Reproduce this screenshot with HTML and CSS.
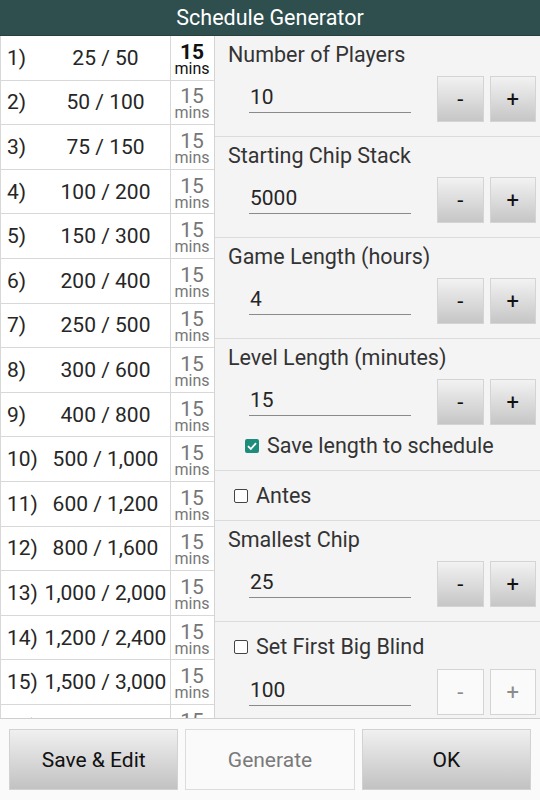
FILE: index.html
```html
<!DOCTYPE html>
<html lang="en">
<head>
    <meta charset="UTF-8">
    <meta name="viewport" content="width=device-width, initial-scale=1.0">
    <title>Schedule Generator</title>
    <link rel="stylesheet" href="styles.css">
</head>
<body>
<div class="app">
    <div class="title-bar">Schedule Generator</div>

    <div class="main">
        <div class="levels">
            <div class="level current"><div class="blinds"><span class="num">1)</span><span class="amt">25 / 50</span></div><div class="mins"><b>15</b><small>mins</small></div></div>
            <div class="level"><div class="blinds"><span class="num">2)</span><span class="amt">50 / 100</span></div><div class="mins"><b>15</b><small>mins</small></div></div>
            <div class="level"><div class="blinds"><span class="num">3)</span><span class="amt">75 / 150</span></div><div class="mins"><b>15</b><small>mins</small></div></div>
            <div class="level"><div class="blinds"><span class="num">4)</span><span class="amt">100 / 200</span></div><div class="mins"><b>15</b><small>mins</small></div></div>
            <div class="level"><div class="blinds"><span class="num">5)</span><span class="amt">150 / 300</span></div><div class="mins"><b>15</b><small>mins</small></div></div>
            <div class="level"><div class="blinds"><span class="num">6)</span><span class="amt">200 / 400</span></div><div class="mins"><b>15</b><small>mins</small></div></div>
            <div class="level"><div class="blinds"><span class="num">7)</span><span class="amt">250 / 500</span></div><div class="mins"><b>15</b><small>mins</small></div></div>
            <div class="level"><div class="blinds"><span class="num">8)</span><span class="amt">300 / 600</span></div><div class="mins"><b>15</b><small>mins</small></div></div>
            <div class="level"><div class="blinds"><span class="num">9)</span><span class="amt">400 / 800</span></div><div class="mins"><b>15</b><small>mins</small></div></div>
            <div class="level"><div class="blinds"><span class="num">10)</span><span class="amt">500 / 1,000</span></div><div class="mins"><b>15</b><small>mins</small></div></div>
            <div class="level"><div class="blinds"><span class="num">11)</span><span class="amt">600 / 1,200</span></div><div class="mins"><b>15</b><small>mins</small></div></div>
            <div class="level"><div class="blinds"><span class="num">12)</span><span class="amt">800 / 1,600</span></div><div class="mins"><b>15</b><small>mins</small></div></div>
            <div class="level"><div class="blinds"><span class="num">13)</span><span class="amt">1,000 / 2,000</span></div><div class="mins"><b>15</b><small>mins</small></div></div>
            <div class="level"><div class="blinds"><span class="num">14)</span><span class="amt">1,200 / 2,400</span></div><div class="mins"><b>15</b><small>mins</small></div></div>
            <div class="level"><div class="blinds"><span class="num">15)</span><span class="amt">1,500 / 3,000</span></div><div class="mins"><b>15</b><small>mins</small></div></div>
            <div class="level"><div class="blinds"><span class="num">16)</span><span class="amt">2,000 / 4,000</span></div><div class="mins"><b>15</b><small>mins</small></div></div>
        </div>

        <div class="settings">
            <div class="section">
                <div class="label">Number of Players</div>
                <div class="field-row">
                    <div class="value">10</div>
                    <button class="step">-</button>
                    <button class="step">+</button>
                </div>
            </div>
            <div class="section">
                <div class="label">Starting Chip Stack</div>
                <div class="field-row">
                    <div class="value">5000</div>
                    <button class="step">-</button>
                    <button class="step">+</button>
                </div>
            </div>
            <div class="section">
                <div class="label">Game Length (hours)</div>
                <div class="field-row">
                    <div class="value">4</div>
                    <button class="step">-</button>
                    <button class="step">+</button>
                </div>
            </div>
            <div class="section">
                <div class="label">Level Length (minutes)</div>
                <div class="field-row">
                    <div class="value">15</div>
                    <button class="step">-</button>
                    <button class="step">+</button>
                </div>
                <div class="check-row indented">
                    <span class="box checked">
                        <svg viewBox="0 0 14 14" width="14" height="14"><path d="M3 7.2 L5.8 10 L11 4.2" fill="none" stroke="#fff" stroke-width="1.8"/></svg>
                    </span>
                    Save length to schedule
                </div>
            </div>
            <div class="section check-section">
                <div class="check-row">
                    <span class="box"></span>
                    Antes
                </div>
            </div>
            <div class="section">
                <div class="label">Smallest Chip</div>
                <div class="field-row">
                    <div class="value">25</div>
                    <button class="step">-</button>
                    <button class="step">+</button>
                </div>
            </div>
            <div class="section check-section">
                <div class="check-row">
                    <span class="box"></span>
                    Set First Big Blind
                </div>
                <div class="field-row">
                    <div class="value">100</div>
                    <button class="step" disabled>-</button>
                    <button class="step" disabled>+</button>
                </div>
            </div>
        </div>
    </div>

    <div class="actions">
        <button class="action">Save &amp; Edit</button>
        <button class="action" disabled>Generate</button>
        <button class="action">OK</button>
    </div>
</div>
</body>
</html>
```

FILE: styles.css
```css
body {
    font-family: Roboto, "Liberation Sans", sans-serif;
    margin: 0;
    padding: 0;
    background-color: #fafafa;
    color: #222;
}

.app {
    width: 540px;
    height: 800px;
    display: flex;
    flex-direction: column;
    overflow: hidden;
}

.title-bar {
    height: 35px;
    line-height: 36px;
    background-color: #2f4f4f;
    border-bottom: 1px solid #263f3f;
    color: #fff;
    font-size: 21.5px;
    text-align: center;
}

.main {
    height: 682px;
    display: flex;
    border-bottom: 1px solid #cfcfcf;
    overflow: hidden;
}

/* blind levels table */
.levels {
    width: 215px;
    flex-shrink: 0;
    background-color: #fff;
    border-right: 1px solid #d4d4d4;
    box-sizing: border-box;
}

.level {
    display: flex;
    height: 44.6px;
    box-sizing: border-box;
    border-bottom: 1px solid #d8d8d8;
}

.blinds {
    width: 171px;
    display: flex;
    align-items: center;
    border-left: 1px solid #d8d8d8;
    border-right: 1px solid #d8d8d8;
    box-sizing: border-box;
    font-size: 21px;
    color: #262626;
}

.num {
    width: 36px;
    padding-left: 6px;
    white-space: nowrap;
}

.amt {
    flex: 1;
    text-align: center;
    padding-right: 2px;
    white-space: nowrap;
}

.mins {
    width: 42px;
    display: flex;
    flex-direction: column;
    align-items: center;
    justify-content: center;
    padding-top: 3px;
    color: #777;
}

.mins b {
    font-weight: normal;
    font-size: 21px;
    line-height: 18px;
}

.mins small {
    font-size: 16px;
    line-height: 15px;
}

.level.current .mins {
    color: #111;
}

.level.current .mins b {
    font-weight: bold;
}

/* settings panel */
.settings {
    flex: 1;
    background-color: #f4f4f4;
    overflow: hidden;
}

.section {
    padding: 7px 4px 14px 13px;
    border-bottom: 1px solid #dcdcdc;
}

.label {
    font-size: 21.5px;
    line-height: 24px;
    color: #333;
}

.field-row {
    display: flex;
    align-items: center;
    gap: 6px;
    margin-top: 9px;
}

.value {
    width: 163px;
    margin-left: 21px;
    margin-right: 20px;
    padding: 0 0 3px 1px;
    border-bottom: 1px solid #8a8a8a;
    font-size: 21px;
    line-height: 24px;
    color: #262626;
}

.step {
    width: 47px;
    height: 46px;
    padding: 0;
    border: 1px solid #d4d4d4;
    background: linear-gradient(#f2f2f2, #c6c6c6);
    font-family: inherit;
    font-size: 22px;
    color: #111;
}

.step:disabled {
    background: #fafafa;
    color: #8c8c8c;
}

.check-row {
    display: flex;
    align-items: center;
    gap: 8px;
    font-size: 21.5px;
    line-height: 24px;
    color: #333;
    padding-left: 6px;
}

.check-row.indented {
    padding-left: 17px;
    margin-top: 9px;
    margin-bottom: -2px;
}

.box {
    width: 14px;
    height: 14px;
    box-sizing: border-box;
    border: 1.5px solid #444;
    border-radius: 2px;
    background-color: #fff;
    flex-shrink: 0;
}

.box.checked {
    border: none;
    background-color: #1e8c7a;
}

.box svg {
    display: block;
}

.check-section {
    padding-top: 13px;
    padding-bottom: 12px;
}

.check-section .field-row {
    margin-top: 10px;
}

/* bottom buttons */
.actions {
    display: flex;
    gap: 7px;
    padding: 10px 9px 0 9px;
    background-color: #fafafa;
}

.action {
    flex: 1;
    height: 61px;
    border: 1px solid #d2d2d2;
    background: linear-gradient(#f0f0f0, #c2c2c2);
    font-family: inherit;
    font-size: 21px;
    color: #111;
}

.action:disabled {
    background: #fafafa;
    border-color: #dcdcdc;
    color: #7a7a7a;
}
```
